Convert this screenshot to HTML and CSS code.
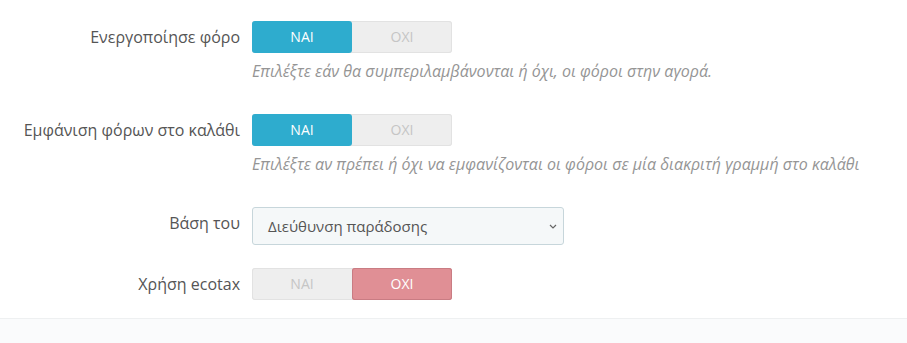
FILE: index.html
```html
<!DOCTYPE html>
<html lang="el">
<head>
  <meta charset="UTF-8">
  <title>Φόροι</title>
  <link rel="stylesheet" href="styles.css">
</head>
<body>

  <div class="panel">
    <div class="form-body">

      <div class="form-row">
        <label class="row-label">Ενεργοποίησε φόρο</label>
        <div class="row-field">
          <div class="switch">
            <span class="switch-opt on-yes">ΝΑΙ</span>
            <span class="switch-opt">ΟΧΙ</span>
          </div>
          <p class="help">Επιλέξτε εάν θα συμπεριλαμβάνονται ή όχι, οι φόροι στην αγορά.</p>
        </div>
      </div>

      <div class="form-row">
        <label class="row-label">Εμφάνιση φόρων στο καλάθι</label>
        <div class="row-field">
          <div class="switch">
            <span class="switch-opt on-yes">ΝΑΙ</span>
            <span class="switch-opt">ΟΧΙ</span>
          </div>
          <p class="help">Επιλέξτε αν πρέπει ή όχι να εμφανίζονται οι φόροι σε μία διακριτή γραμμή στο καλάθι</p>
        </div>
      </div>

      <div class="form-row">
        <label class="row-label">Βάση του</label>
        <div class="row-field">
          <div class="select">
            <span>Διεύθυνση παράδοσης</span>
            <svg width="8" height="5" viewBox="0 0 8 5"><path d="M1 1l3 3 3-3" fill="none" stroke="#666" stroke-width="1.2"/></svg>
          </div>
        </div>
      </div>

      <div class="form-row">
        <label class="row-label">Χρήση ecotax</label>
        <div class="row-field">
          <div class="switch">
            <span class="switch-opt">ΝΑΙ</span>
            <span class="switch-opt on-no">ΟΧΙ</span>
          </div>
        </div>
      </div>

    </div>
    <div class="panel-footer"></div>
  </div>

</body>
</html>
```

FILE: styles.css
```css
body {
  margin: 0;
  background: #fff;
  font-family: 'Open Sans', sans-serif;
  color: #555;
}

.form-body {
  padding: 21px 0 18px;
}

.form-row {
  display: grid;
  grid-template-columns: 240px 1fr;
  column-gap: 12px;
  margin-bottom: 23px;
}

.form-row:last-child {
  margin-bottom: 0;
}

.row-label {
  text-align: right;
  font-size: 16px;
  line-height: 32px;
  color: #555;
}

.switch {
  display: flex;
  width: 200px;
  height: 32px;
  background: #eee;
  border-radius: 3px;
  box-shadow: inset 0 0 0 1px #e2e2e2;
}

.switch-opt {
  flex: 1;
  text-align: center;
  line-height: 32px;
  font-size: 14px;
  color: #c5c5c5;
}

.switch-opt.on-yes {
  background: #2eacce;
  color: #fff;
  border-radius: 3px;
}

.switch-opt.on-no {
  background: #e08f95;
  color: #fff;
  border-radius: 3px;
  box-shadow: inset 0 0 0 1px #c97c83;
}

.help {
  margin: 7px 0 9px;
  font-size: 16px;
  line-height: 22px;
  font-style: italic;
  color: #959595;
}

.select {
  width: 312px;
  height: 38px;
  box-sizing: border-box;
  display: flex;
  align-items: center;
  justify-content: space-between;
  padding: 0 6px 0 15px;
  background: #f5f8f9;
  border: 1px solid #c7d6db;
  border-radius: 3px;
  font-size: 15px;
  color: #555;
}

.panel-footer {
  height: 24px;
  background: #fafbfc;
  border-top: 1px solid #eef0f1;
}
```
